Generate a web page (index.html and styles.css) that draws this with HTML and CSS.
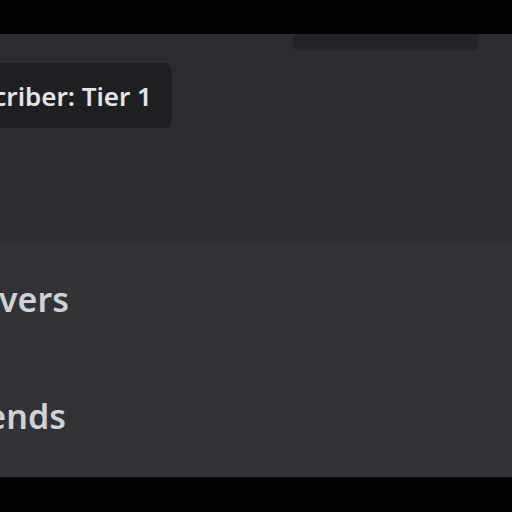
FILE: index.html
```html
<!DOCTYPE html>
<html lang="en">
<head>
    <meta charset="UTF-8">
    <meta name="viewport" content="width=device-width, initial-scale=1.0">
    <title>Profile</title>
    <link rel="stylesheet" href="styles.css">
</head>
<body>
    <div class="screen">
        <div class="topbar"></div>

        <div class="header">
            <div class="tab-row">
                <div class="tab"></div>
            </div>
            <div class="role-pill">
                <span class="role-name">Server Subscriber: Tier 1</span>
            </div>
        </div>

        <div class="list">
            <div class="list-item">
                <div class="label label-servers"><span>Mutual Servers</span></div>
            </div>
            <div class="list-item">
                <div class="label label-friends"><span>Mutual Friends</span></div>
            </div>
        </div>

        <div class="bottombar"></div>
    </div>
</body>
</html>
```

FILE: styles.css
```css
body {
    margin: 0;
    background-color: #000;
    font-family: "Noto Sans", "Open Sans", sans-serif;
    overflow: hidden;
}
.screen {
    width: 512px;
    height: 512px;
    display: flex;
    flex-direction: column;
}
.topbar {
    height: 34px;
    background-color: #020203;
}
.header {
    height: 206px;
    background-color: #2b2c30;
    display: flex;
    flex-direction: column;
}
.tab-row {
    display: flex;
    justify-content: flex-end;
    padding-right: 34px;
}
.tab {
    width: 185px;
    height: 16px;
    background-color: #232427;
    border-radius: 0 0 4px 4px;
}
.role-pill {
    margin-top: 13px;
    width: 172px;
    height: 65px;
    box-sizing: border-box;
    padding-right: 20px;
    background-color: #1e1f22;
    border-radius: 0 8px 8px 0;
    display: flex;
    align-items: center;
    justify-content: flex-end;
    overflow: hidden;
}
.role-name {
    white-space: nowrap;
    color: #e3e4e8;
    font-size: 26px;
    font-weight: 600;
    line-height: 1;
}
.list {
    height: 237px;
    background-color: #313338;
    box-shadow: inset 0 6px 6px -4px rgba(0, 0, 0, 0.12);
    display: flex;
    flex-direction: column;
}
.list-item {
    height: 117px;
    display: flex;
    align-items: center;
}
.label {
    display: flex;
    justify-content: flex-end;
    overflow: hidden;
    white-space: nowrap;
    color: #cfd1d7;
    font-size: 34px;
    font-weight: 600;
    line-height: 1;
}
.label-servers {
    width: 69px;
}
.label-friends {
    width: 66px;
}
.bottombar {
    flex: 1;
    background-color: #030305;
}
```
